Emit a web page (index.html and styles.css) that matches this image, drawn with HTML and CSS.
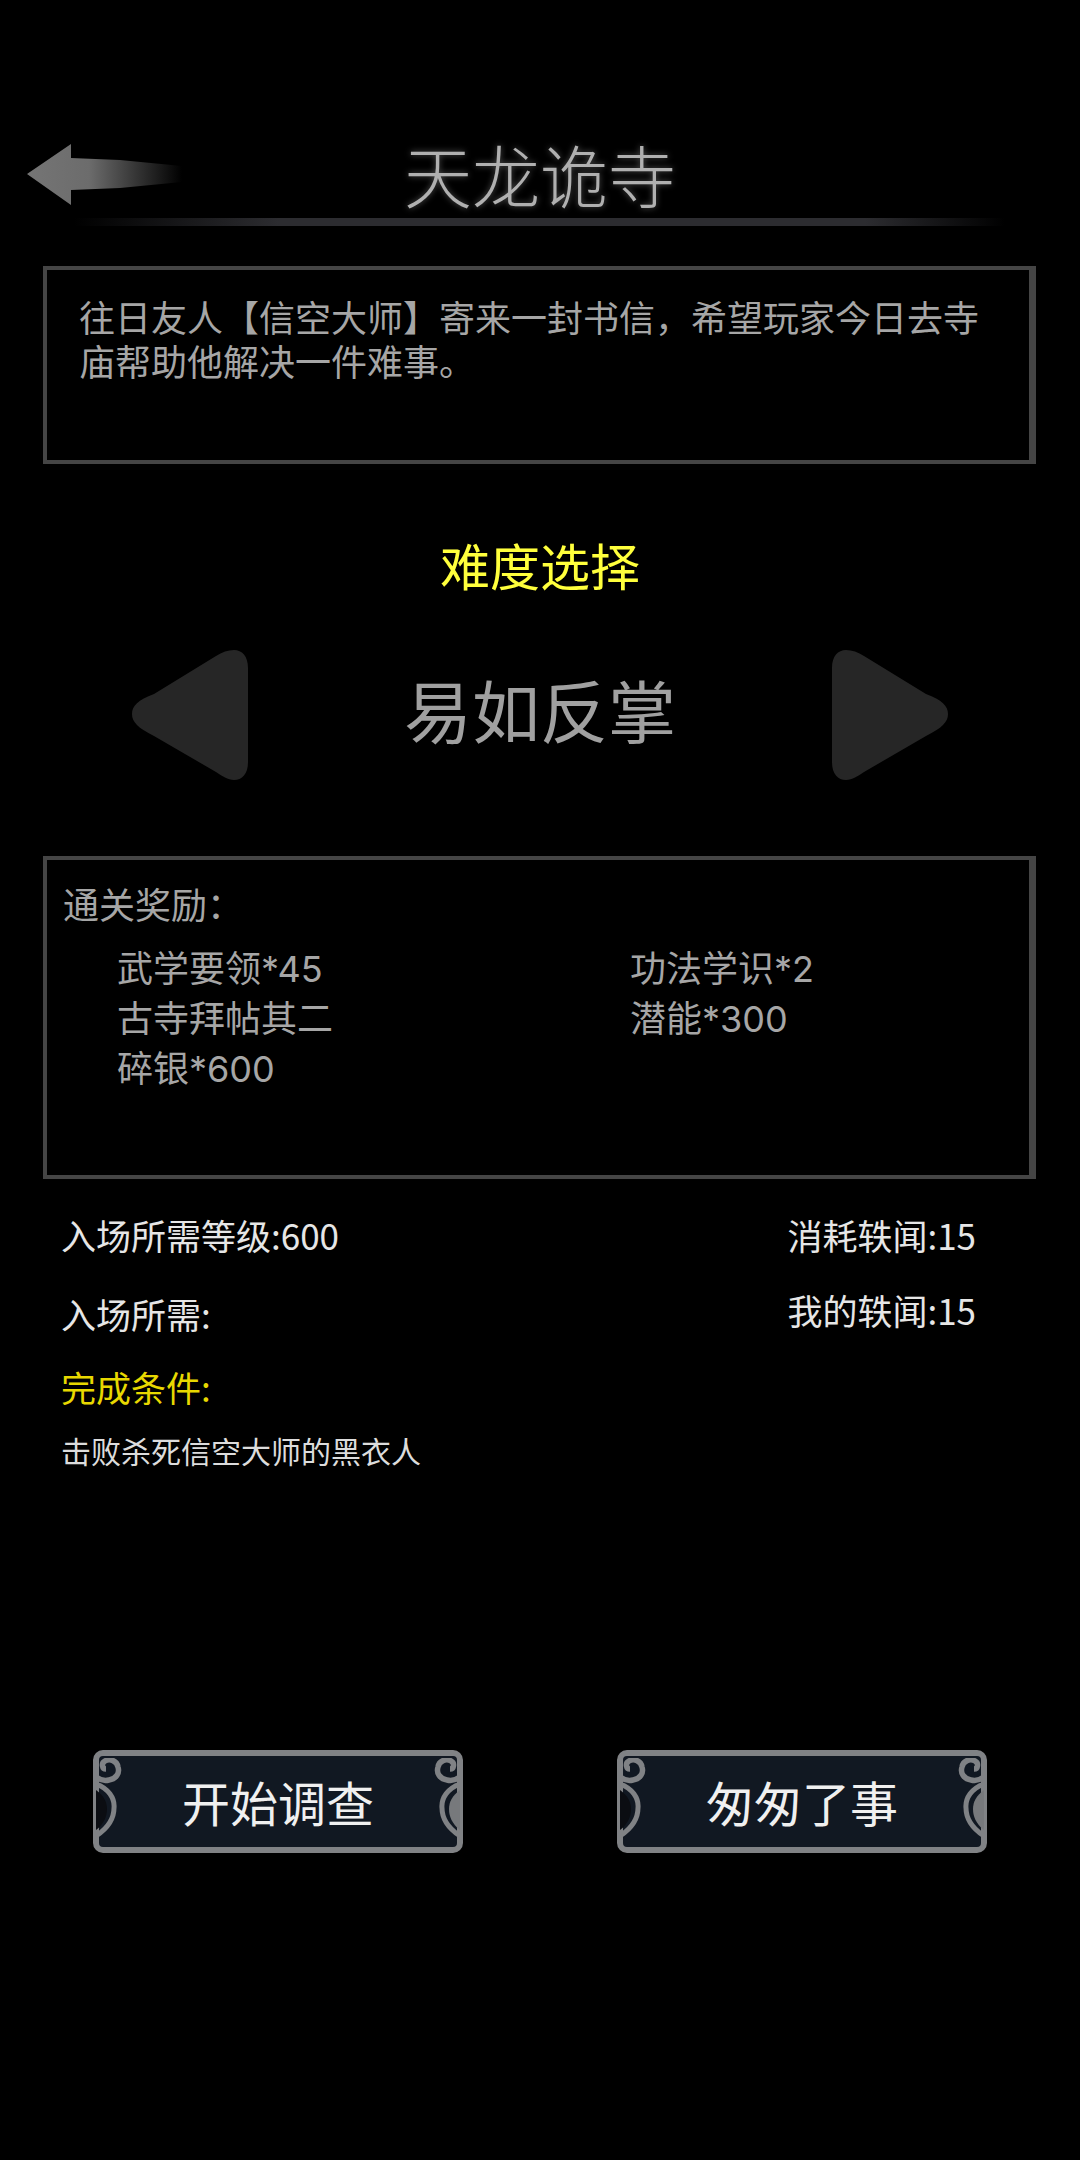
FILE: index.html
```html
<!DOCTYPE html>
<html lang="zh-CN">
<head>
    <meta charset="UTF-8">
    <meta name="viewport" content="width=device-width, initial-scale=1.0">
    <title>天龙诡寺</title>
    <link rel="stylesheet" href="styles.css">
</head>
<body>
    <svg class="defs" width="0" height="0">
        <defs>
            <linearGradient id="arrow-fade" x1="27" y1="0" x2="182" y2="0" gradientUnits="userSpaceOnUse">
                <stop offset="0" stop-color="#757575"/>
                <stop offset="0.4" stop-color="#6c6c6c"/>
                <stop offset="1" stop-color="#000"/>
            </linearGradient>
            <g id="ornament" fill="none" stroke="#808285">
                <path d="M0 32C8 38 11 44 11 51C11 58 8 66 0 72Z" fill="currentColor" stroke="none"/>
                <path d="M0 26C12 30 19 40 18 50C18 60 12 70 0 78" stroke-width="5"/>
                <path d="M0 19C4 22 9 23 13 22C20 21 24 15 22 9C21 3 14 0 9 3C5 5 6 11 10 11" stroke-width="5.5"/>
            </g>
        </defs>
    </svg>

    <header class="page-header">
        <svg class="back-arrow" width="156" height="62" viewBox="27 142 156 62">
            <path d="M27 172L71 142V156L120 158L182 164V180L120 186L71 188V203Z" fill="url(#arrow-fade)"/>
        </svg>
        <h1 class="page-title">天龙诡寺</h1>
    </header>
    <div class="title-rule"></div>

    <section class="panel story">
        往日友人【信空大师】寄来一封书信，希望玩家今日去寺庙帮助他解决一件难事。
    </section>

    <h2 class="difficulty-title">难度选择</h2>
    <div class="difficulty-picker">
        <svg class="picker-arrow" width="116" height="130" viewBox="0 0 116 130">
            <path d="M102 0C110 0 116 6 116 18V112C116 124 110 130 102 130C96 130 90 126 84 122L22 86C6 78 0 72 0 64C0 56 6 50 22 44L84 6C90 2 96 0 102 0Z" fill="#262626"/>
        </svg>
        <div class="difficulty-name">易如反掌</div>
        <svg class="picker-arrow flipped" width="116" height="130" viewBox="0 0 116 130">
            <path d="M102 0C110 0 116 6 116 18V112C116 124 110 130 102 130C96 130 90 126 84 122L22 86C6 78 0 72 0 64C0 56 6 50 22 44L84 6C90 2 96 0 102 0Z" fill="#262626"/>
        </svg>
    </div>

    <section class="panel rewards">
        <div class="rewards-title">通关奖励：</div>
        <ul class="rewards-list">
            <li>武学要领*45</li>
            <li>功法学识*2</li>
            <li>古寺拜帖其二</li>
            <li>潜能*300</li>
            <li>碎银*600</li>
        </ul>
    </section>

    <section class="entry-info">
        <div class="info-row">
            <span>入场所需等级:600</span>
            <span class="info-right">消耗轶闻:15</span>
        </div>
        <div class="info-row second">
            <span>入场所需:</span>
            <span class="info-right">我的轶闻:15</span>
        </div>
        <div class="goal-title">完成条件:</div>
        <div class="goal-text">击败杀死信空大师的黑衣人</div>
    </section>

    <div class="actions">
        <button class="game-btn">
            <svg class="btn-ornament left" width="34" height="90" viewBox="0 0 34 90"><use href="#ornament"/></svg>
            开始调查
            <svg class="btn-ornament right" width="34" height="90" viewBox="0 0 34 90"><use href="#ornament"/></svg>
        </button>
        <button class="game-btn">
            <svg class="btn-ornament left" width="34" height="90" viewBox="0 0 34 90"><use href="#ornament"/></svg>
            匆匆了事
            <svg class="btn-ornament right" width="34" height="90" viewBox="0 0 34 90"><use href="#ornament"/></svg>
        </button>
    </div>
</body>
</html>
```

FILE: styles.css
```css
* {
    margin: 0;
    padding: 0;
    box-sizing: border-box;
    font-family: "Noto Sans CJK SC", "Noto Sans", sans-serif;
}

body {
    width: 1080px;
    height: 2160px;
    overflow: hidden;
    background-color: #000;
    color: #a6a6a6;
}

.defs {
    display: block;
    height: 0;
}

.page-header {
    display: grid;
    grid-template-columns: 1fr auto 1fr;
    align-items: center;
    height: 80px;
    margin-top: 134px;
}

.back-arrow {
    display: block;
    margin: -12px 0 0 27px;
}

.page-title {
    padding-bottom: 14px;
    font-size: 68px;
    line-height: 80px;
    font-weight: 300;
    color: #b0b0b0;
    text-shadow: 0 0 6px rgba(255, 255, 255, 0.35);
}

.title-rule {
    width: 931px;
    height: 8px;
    margin: 4px 0 0 74px;
    background: linear-gradient(to right, transparent, #2c2c30 22%, #2c2c30 85%, transparent);
}

.panel {
    width: 993px;
    margin-left: 43px;
    border: 4px solid #454545;
    border-right-width: 7px;
}

.story {
    height: 198px;
    margin-top: 40px;
    padding: 24px 30px 0 32px;
    font-size: 36px;
    line-height: 44px;
}

.difficulty-title {
    margin-top: 64px;
    font-size: 50px;
    line-height: 72px;
    font-weight: 400;
    text-align: center;
    color: #ffff3c;
}

.difficulty-picker {
    display: flex;
    align-items: center;
    justify-content: space-between;
    width: 816px;
    height: 130px;
    margin: 50px 0 0 132px;
}

.picker-arrow {
    display: block;
}

.picker-arrow.flipped {
    transform: scaleX(-1);
}

.difficulty-name {
    padding-bottom: 12px;
    font-size: 68px;
    line-height: 80px;
    color: #a0a0a0;
}

.rewards {
    height: 323px;
    margin-top: 76px;
    padding: 18px 0 0 16px;
    font-size: 36px;
}

.rewards-title {
    line-height: 50px;
}

.rewards-list {
    display: grid;
    grid-template-columns: 513px 1fr;
    grid-auto-rows: 50px;
    margin: 16px 0 0 54px;
    list-style: none;
    line-height: 50px;
}

.rewards-list li {
    font-family: Inter, "Noto Sans CJK SC", sans-serif;
}

.entry-info {
    padding: 0 104px 0 61px;
    font-size: 35px;
    color: #e6e6e6;
}

.info-row {
    display: flex;
    justify-content: space-between;
    height: 50px;
    margin-top: 31px;
    line-height: 50px;
}

.info-row.second {
    margin-top: 29px;
}

.info-row.second .info-right {
    margin-top: -4px;
}

.goal-title {
    margin-top: 23px;
    line-height: 50px;
    color: #e8d800;
}

.goal-text {
    margin-top: 18px;
    font-size: 30px;
    line-height: 40px;
    color: #dcdcdc;
}

.actions {
    display: flex;
    gap: 154px;
    margin: 280px 0 0 93px;
}

.game-btn {
    position: relative;
    width: 370px;
    height: 103px;
    padding-bottom: 2px;
    border: 6px solid #808285;
    border-radius: 10px;
    background-color: #111822;
    color: #f0f0f0;
    font-size: 48px;
    cursor: pointer;
}

.btn-ornament {
    position: absolute;
    top: 2px;
}

.btn-ornament.left {
    left: -3px;
    color: #0b0d12;
}

.btn-ornament.right {
    right: -3px;
    color: #77797c;
    transform: scaleX(-1);
}
```
